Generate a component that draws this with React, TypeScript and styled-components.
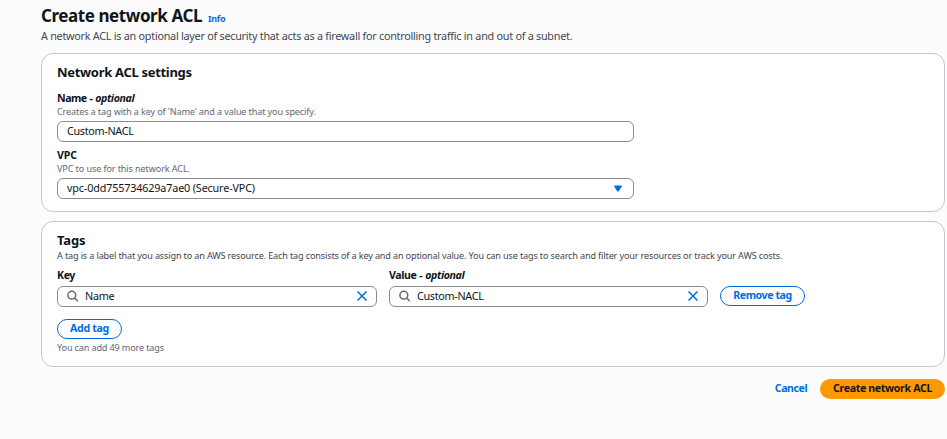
import React from 'react';
import styled, { createGlobalStyle } from 'styled-components';

const GlobalStyle = createGlobalStyle`
  * { box-sizing: border-box; }
  body {
    margin: 0;
    background: #fcfcfd;
    color: #0f141a;
    font-family: "Noto Sans", "Open Sans", sans-serif;
  }
  h1, h2, p { margin: 0; }
`;

interface Tracked {
  $tracking: number;
}

const Page = styled.main`
  display: flex;
  flex-direction: column;
  width: 947px;
  height: 439px;
  padding: 5px 2px 0 41px;
  overflow: hidden;
`;

const TitleRow = styled.header`
  display: flex;
  align-items: baseline;
  gap: 6px;
  height: 23px;
`;

const PageTitle = styled.h1`
  font-size: 17px;
  line-height: 22px;
  font-weight: 700;
  letter-spacing: -0.424px;
  white-space: nowrap;
`;

const InfoLink = styled.a`
  color: #006ce0;
  font-size: 9px;
  line-height: 12px;
  font-weight: 700;
  letter-spacing: -0.28px;
`;

const PageDescription = styled.p`
  margin-bottom: 9px;
  color: #424650;
  font-size: 10.8px;
  line-height: 16px;
  letter-spacing: -0.255px;
  white-space: nowrap;
`;

const Card = styled.section<{ $height: number }>`
  display: flex;
  flex-direction: column;
  flex: none;
  height: ${(p) => p.$height}px;
  padding: 10px 15px 0;
  background: #fff;
  border: 1px solid #c6c6cd;
  border-radius: 12px;

  & + & { margin-top: 9px; }
`;

const CardTitle = styled.h2<Tracked>`
  font-size: 13px;
  line-height: 16px;
  font-weight: 700;
  letter-spacing: ${(p) => p.$tracking}px;
`;

const CardDescription = styled.p`
  margin-top: 1px;
  color: #424650;
  font-size: 9.1px;
  line-height: 13px;
  letter-spacing: -0.147px;
  white-space: nowrap;
`;

const Field = styled.div<{ $top: number; $width: number }>`
  display: flex;
  flex-direction: column;
  width: ${(p) => p.$width}px;
  margin-top: ${(p) => p.$top}px;
`;

const Label = styled.label<Tracked>`
  height: 14px;
  font-size: 10.6px;
  line-height: 14px;
  font-weight: 700;
  letter-spacing: ${(p) => p.$tracking}px;
  word-spacing: 0.5px;
  white-space: pre;
`;

const Hint = styled.p<Tracked>`
  color: #656871;
  font-size: 9.1px;
  line-height: 13px;
  letter-spacing: ${(p) => p.$tracking}px;
  white-space: nowrap;
`;

const Control = styled.div<{ $top: number; $right: number }>`
  display: flex;
  align-items: center;
  height: 21px;
  margin-top: ${(p) => p.$top}px;
  padding: 0 ${(p) => p.$right}px 1px 9px;
  background: #fff;
  border: 1px solid #8c8c94;
  border-radius: 6px;
`;

const Value = styled.span<Tracked>`
  flex: 1;
  font-size: 10.8px;
  line-height: 18px;
  letter-spacing: ${(p) => p.$tracking}px;
  white-space: nowrap;
`;

const Icon = styled.svg`
  display: block;
  flex: none;
`;

const SearchGlyph = styled(Icon)`
  margin-right: 6px;
`;

const TagRow = styled.div`
  display: flex;
  align-items: flex-start;
  gap: 12px;
`;

const Button = styled.button<Tracked & { $variant: 'normal' | 'primary' | 'link'; $width: number }>`
  display: flex;
  align-items: center;
  justify-content: center;
  flex: none;
  width: ${(p) => p.$width}px;
  height: 20px;
  padding: 0 0 1px;
  border: ${(p) => (p.$variant === 'normal' ? '1px solid #006ce0' : '0')};
  border-radius: 10px;
  background: ${(p) => (p.$variant === 'primary' ? '#ff9900' : p.$variant === 'normal' ? '#fff' : 'transparent')};
  color: ${(p) => (p.$variant === 'primary' ? '#0f141a' : '#006ce0')};
  font-family: inherit;
  font-size: 10.6px;
  line-height: 17px;
  font-weight: 700;
  letter-spacing: ${(p) => p.$tracking}px;
  white-space: nowrap;
`;

const RemoveSlot = styled.div`
  margin-top: 24px;
`;

const AddSlot = styled.div`
  margin: 12px 0 2px;
`;

const Actions = styled.footer`
  display: flex;
  justify-content: flex-end;
  gap: 12px;
  margin-top: 12px;
`;

const SearchIcon = () => (
  <SearchGlyph width="12" height="12" viewBox="0 0 12 12" fill="none" stroke="#656871" strokeWidth="1.5">
    <circle cx="4.8" cy="5.2" r="3.9" />
    <path d="M7.6 8 10.8 11.2" />
  </SearchGlyph>
);

const ClearIcon = () => (
  <Icon width="10" height="10" viewBox="0 0 10 10" fill="none" stroke="#006ce0" strokeWidth="1.5">
    <path d="M0.5 0.5 9.5 9.5M9.5 0.5 0.5 9.5" />
  </Icon>
);

const CaretIcon = () => (
  <Icon width="8" height="7" viewBox="0 0 8 7" fill="#006ce0" stroke="#006ce0" strokeLinejoin="round">
    <path d="M0.5 1H7.5L4.3 6.2H3.7Z" />
  </Icon>
);

const Optional = styled.em`
  letter-spacing: -0.38px;
`;

export default function App() {
  return (
    <>
      <GlobalStyle />
      <Page>
        <TitleRow>
          <PageTitle>Create network ACL</PageTitle>
          <InfoLink>Info</InfoLink>
        </TitleRow>
        <PageDescription>
          A network ACL is an optional layer of security that acts as a firewall for controlling traffic in and out of a subnet.
        </PageDescription>

        <Card $height={159}>
          <CardTitle $tracking={-0.31}>Network ACL settings</CardTitle>
          <Field $top={11} $width={577}>
            <Label $tracking={-0.48}>Name - <Optional>optional</Optional></Label>
            <Hint $tracking={-0.133}>Creates a tag with a key of 'Name' and a value that you specify.</Hint>
            <Control $top={3} $right={9}>
              <Value $tracking={-0.32}>Custom-NACL</Value>
            </Control>
          </Field>
          <Field $top={6} $width={577}>
            <Label $tracking={-0.1}>VPC</Label>
            <Hint $tracking={-0.117}>VPC to use for this network ACL.</Hint>
            <Control $top={3} $right={11}>
              <Value $tracking={-0.155}>vpc-0dd755734629a7ae0 (Secure-VPC)</Value>
              <CaretIcon />
            </Control>
          </Field>
        </Card>

        <Card $height={146}>
          <CardTitle $tracking={-0.12}>Tags</CardTitle>
          <CardDescription>
            A tag is a label that you assign to an AWS resource. Each tag consists of a key and an optional value. You can use tags to search and filter your resources or track your AWS costs.
          </CardDescription>
          <TagRow>
            <Field $top={6} $width={320}>
              <Label $tracking={-0.4}>Key</Label>
              <Control $top={4} $right={9}>
                <SearchIcon />
                <Value $tracking={-0.3}>Name</Value>
                <ClearIcon />
              </Control>
            </Field>
            <Field $top={6} $width={319}>
              <Label $tracking={-0.38}>Value - <Optional>optional</Optional></Label>
              <Control $top={4} $right={9}>
                <SearchIcon />
                <Value $tracking={-0.32}>Custom-NACL</Value>
                <ClearIcon />
              </Control>
            </Field>
            <RemoveSlot>
              <Button $variant="normal" $width={85} $tracking={-0.43}>Remove tag</Button>
            </RemoveSlot>
          </TagRow>
          <AddSlot>
            <Button $variant="normal" $width={65} $tracking={-0.3}>Add tag</Button>
          </AddSlot>
          <Hint $tracking={-0.147}>You can add 49 more tags</Hint>
        </Card>

        <Actions>
          <Button $variant="link" $width={34} $tracking={-0.42}>Cancel</Button>
          <Button $variant="primary" $width={125} $tracking={-0.34}>Create network ACL</Button>
        </Actions>
      </Page>
    </>
  );
}
